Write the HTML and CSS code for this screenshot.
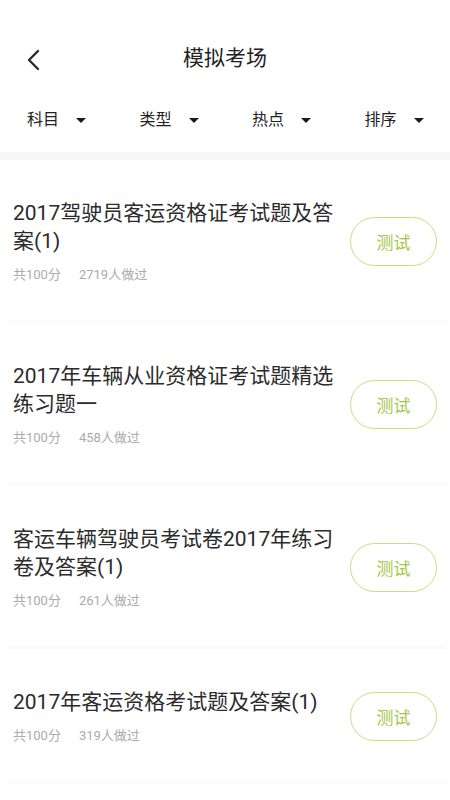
FILE: index.html
```html
<!DOCTYPE html>
<html lang="zh">
<head>
<meta charset="utf-8">
<link rel="stylesheet" href="styles.css">
</head>
<body>
<div class="page">
  <div class="status"></div>
  <header class="header">
    <div class="back">
      <svg width="16" height="22" viewBox="0 0 16 22"><path d="M12 2 L3 11 L12 20" fill="none" stroke="#2a2a2a" stroke-width="2.4" stroke-linecap="round" stroke-linejoin="round"/></svg>
    </div>
    <h1 class="title">模拟考场</h1>
  </header>
  <nav class="filters">
    <div class="filter"><span>科目</span><i class="tri"></i></div>
    <div class="filter"><span>类型</span><i class="tri"></i></div>
    <div class="filter"><span>热点</span><i class="tri"></i></div>
    <div class="filter"><span>排序</span><i class="tri"></i></div>
  </nav>
  <div class="band"></div>
  <ul class="list">
    <li class="item">
      <div class="info">
        <div class="name">2017驾驶员客运资格证考试题及答案(1)</div>
        <div class="meta"><span>共100分</span><span>2719人做过</span></div>
      </div>
      <button class="btn">测试</button>
    </li>
    <li class="item">
      <div class="info">
        <div class="name">2017年车辆从业资格证考试题精选练习题一</div>
        <div class="meta"><span>共100分</span><span>458人做过</span></div>
      </div>
      <button class="btn">测试</button>
    </li>
    <li class="item">
      <div class="info">
        <div class="name">客运车辆驾驶员考试卷2017年练习卷及答案(1)</div>
        <div class="meta"><span>共100分</span><span>261人做过</span></div>
      </div>
      <button class="btn">测试</button>
    </li>
    <li class="item">
      <div class="info">
        <div class="name">2017年客运资格考试题及答案(1)</div>
        <div class="meta"><span>共100分</span><span>319人做过</span></div>
      </div>
      <button class="btn">测试</button>
    </li>
  </ul>
</div>
</body>
</html>
```

FILE: styles.css
```css
* { box-sizing: border-box; }
html, body { margin: 0; padding: 0; background: #fff; }
body {
  font-family: Roboto, "Noto Sans CJK SC", "Noto Sans", sans-serif;
  color: #2b2b2b;
  width: 450px;
  height: 800px;
  overflow: hidden;
}
.status { height: 28px; }
.header {
  height: 60px;
  position: relative;
  display: flex;
  align-items: center;
  justify-content: center;
}
.back {
  position: absolute;
  left: 26px;
  top: 21px;
  width: 16px;
  height: 22px;
  display: flex;
}
.title {
  margin: 0;
  font-size: 21px;
  font-weight: 400;
  color: #222;
  line-height: 1;
}
.filters {
  height: 64px;
  display: grid;
  grid-template-columns: repeat(4, 1fr);
  align-items: center;
}
.filter {
  display: flex;
  align-items: center;
  padding-left: 27px;
  font-size: 16px;
  color: #222;
  line-height: 1;
}
.tri {
  display: block;
  width: 0;
  height: 0;
  margin-left: 17px;
  border-left: 5px solid transparent;
  border-right: 5px solid transparent;
  border-top: 5px solid #1a1a1a;
}
.band { height: 8px; background: #f7f5f9; }
.list { list-style: none; margin: 0; padding: 0; }
.item {
  display: flex;
  align-items: center;
  padding: 39px 13px 39px 13px;
  position: relative;
}
.item::after {
  content: "";
  position: absolute;
  left: 8px;
  right: 4px;
  bottom: 0;
  height: 3px;
  background: #faf9fb;
}
.info { flex: 1; min-width: 0; padding-right: 10px; }
.name {
  font-size: 21px;
  line-height: 28px;
  color: #2b2b2b;
}
.meta {
  margin-top: 10px;
  font-size: 13px;
  line-height: 19px;
  color: #ababab;
  display: flex;
  gap: 18px;
}
.btn {
  flex: none;
  width: 87px;
  height: 49px;
  border: 1.5px solid #cadd7e;
  border-radius: 25px;
  background: #fff;
  color: #a9c54c;
  font-family: inherit;
  font-size: 17px;
  padding: 0;
}
```
